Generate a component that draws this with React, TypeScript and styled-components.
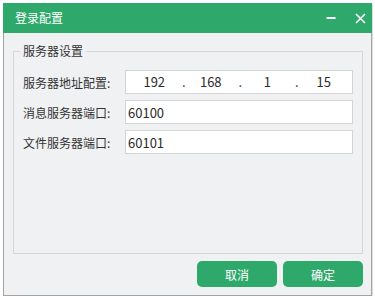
import React from "react";
import styled, { createGlobalStyle } from "styled-components";

const GlobalStyle = createGlobalStyle`
  html, body { margin: 0; padding: 0; background: #ffffff; }
  body { font-family: "Noto Sans CJK SC", "Noto Sans", sans-serif; }
  * { box-sizing: border-box; }
`;

const Window = styled.div`
  margin: 3px 0 0 3px;
  width: 369px;
  height: 293px;
  display: flex;
  flex-direction: column;
  background: #f0f1f3;
  border: 1px solid #a3a3a3;
  border-top: none;
  box-shadow: 1px 1px 1px rgba(0, 0, 0, 0.12);
`;

const TitleBar = styled.div`
  height: 30px;
  margin: 0 -1px;
  background: #2fa86b;
  color: #ffffff;
  display: flex;
  align-items: center;
  padding: 0 0 0 12px;
  font-size: 12px;
`;

const Title = styled.div`
  flex: 1;
  line-height: 30px;
`;

const TitleButton = styled.div`
  width: 24px;
  height: 30px;
  display: flex;
  align-items: center;
  justify-content: center;
  margin-left: 5px;
`;

const Body = styled.div`
  flex: 1;
  display: flex;
  flex-direction: column;
  padding: 10px 8px 8px 9px;
`;

const Group = styled.fieldset`
  flex: 1;
  margin: 0;
  border: 1px solid #d6d7d9;
  padding: 11px 9px 0 9px;
  min-width: 0;
`;

const Legend = styled.legend`
  margin-left: -3px;
  padding: 0 3px;
  font-size: 12px;
  line-height: 16px;
  color: #333333;
`;

const FormGrid = styled.div`
  display: grid;
  grid-template-columns: 102px 228px;
  grid-auto-rows: 24px;
  row-gap: 6px;
  align-items: center;
`;

const Label = styled.div`
  font-size: 12px;
  color: #333333;
  white-space: nowrap;
`;

const Input = styled.div`
  height: 24px;
  background: #ffffff;
  border: 1px solid #d3d4d6;
  font-size: 13px;
  color: #2b2b2b;
  display: flex;
  align-items: center;
  padding-left: 2px;
`;

const IpInput = styled(Input)`
  padding: 0;
  display: grid;
  grid-template-columns: repeat(4, 1fr);
  position: relative;
`;

const IpSegment = styled.div`
  position: relative;
  text-align: center;
  line-height: 22px;
`;

const IpDot = styled.span`
  position: absolute;
  right: -3px;
  top: 0;
  line-height: 22px;
  font-size: 13px;
`;

const Footer = styled.div`
  display: flex;
  justify-content: flex-end;
  gap: 6px;
  padding-top: 7px;
`;

const Button = styled.div`
  width: 80px;
  height: 26px;
  border-radius: 5px;
  background: #2fa86b;
  color: #ffffff;
  font-size: 12px;
  display: flex;
  align-items: center;
  justify-content: center;
`;

const ip = ["192", "168", "1", "15"];

export default function App() {
  return (
    <>
      <GlobalStyle />
      <Window>
        <TitleBar>
          <Title>登录配置</Title>
          <TitleButton>
            <svg width="10" height="10" viewBox="0 0 10 10">
              <rect x="0.5" y="4" width="9" height="2" fill="#ffffff" />
            </svg>
          </TitleButton>
          <TitleButton>
            <svg width="11" height="11" viewBox="0 0 11 11">
              <path d="M1 1 L10 10 M10 1 L1 10" stroke="#ffffff" strokeWidth="1.6" />
            </svg>
          </TitleButton>
        </TitleBar>
        <Body>
          <Group>
            <Legend>服务器设置</Legend>
            <FormGrid>
              <Label>服务器地址配置:</Label>
              <IpInput>
                {ip.map((n, i) => (
                  <IpSegment key={i}>
                    {n}
                    {i < 3 && <IpDot>.</IpDot>}
                  </IpSegment>
                ))}
              </IpInput>
              <Label>消息服务器端口:</Label>
              <Input>60100</Input>
              <Label>文件服务器端口:</Label>
              <Input>60101</Input>
            </FormGrid>
          </Group>
          <Footer>
            <Button>取消</Button>
            <Button>确定</Button>
          </Footer>
        </Body>
      </Window>
    </>
  );
}
